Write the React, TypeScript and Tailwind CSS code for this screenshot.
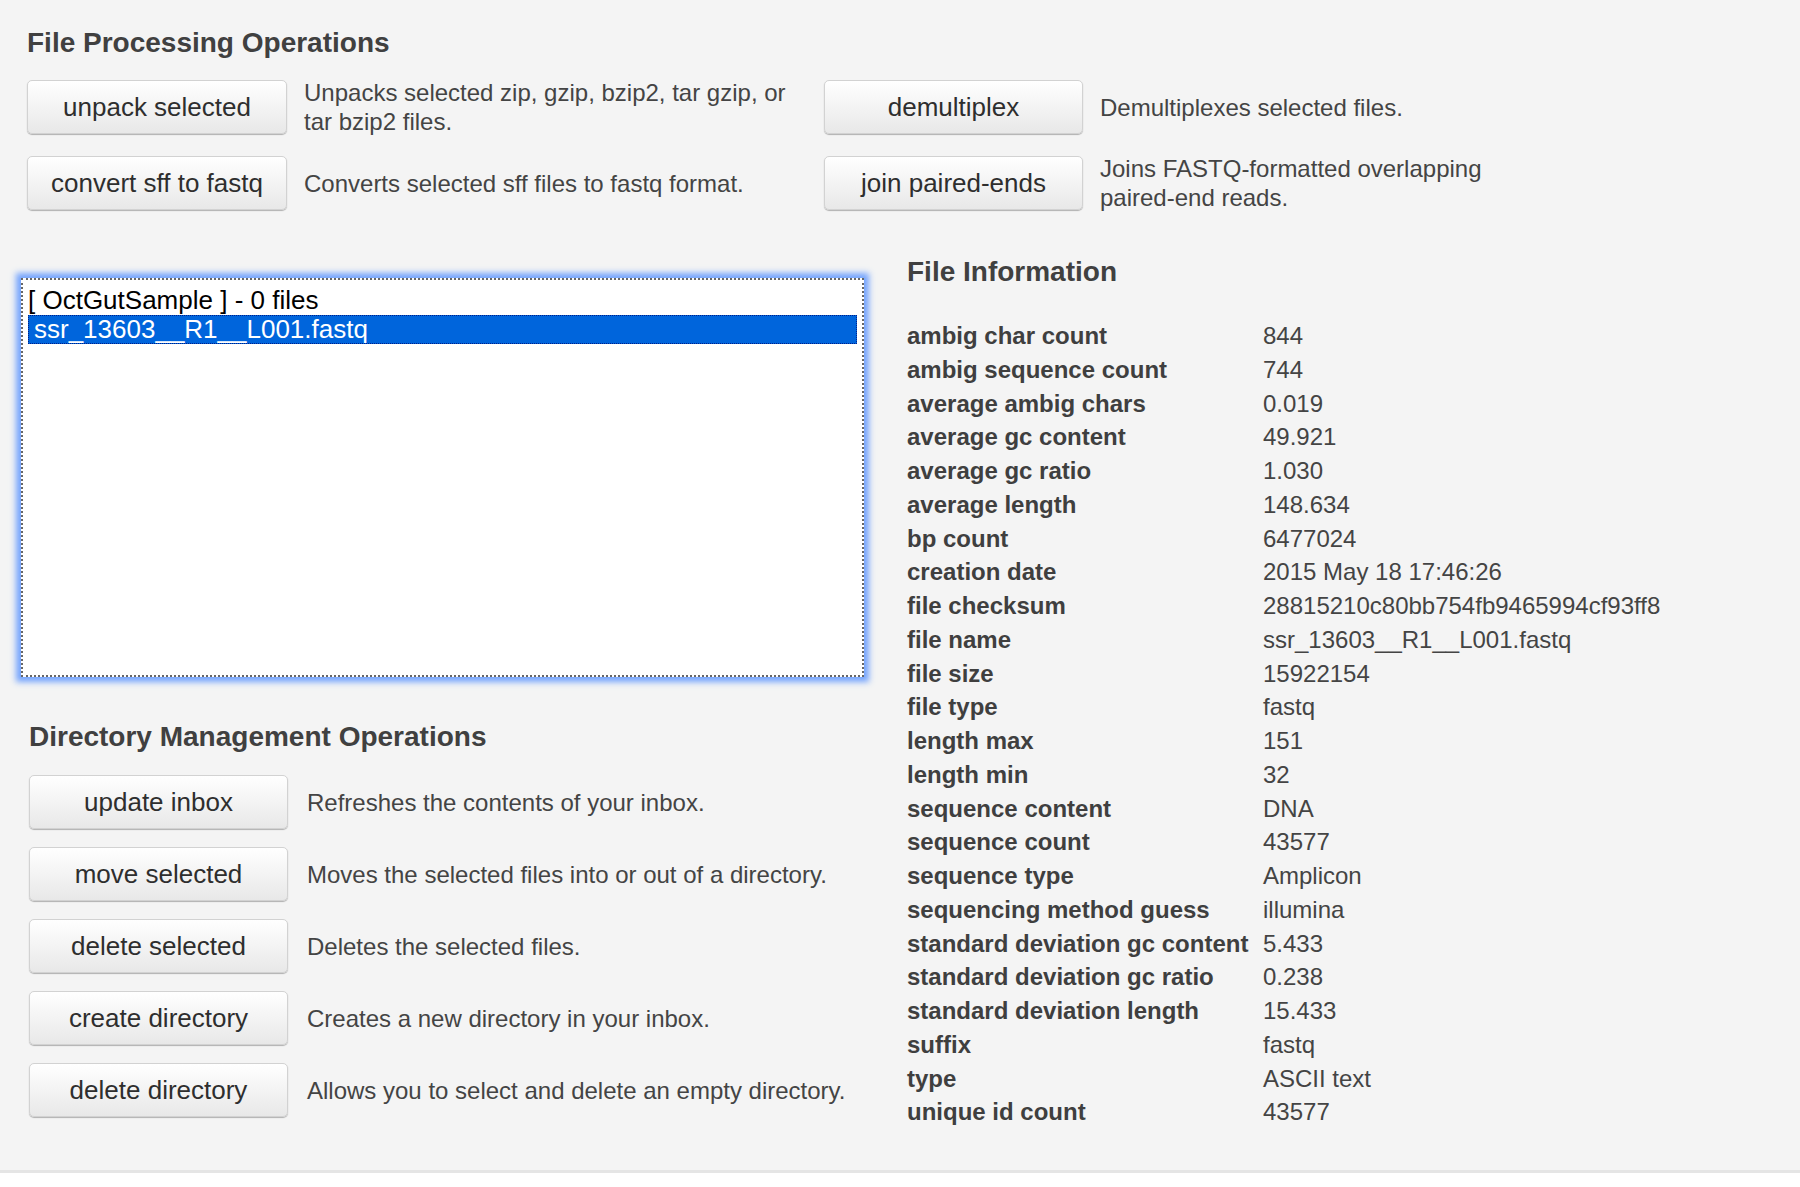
import React from "react";

const font = { fontFamily: '"Liberation Sans", Arial, Helvetica, sans-serif' };

function Btn({ children }: { children: React.ReactNode }) {
  return (
    <button className="h-[54px] w-full rounded-[5px] border border-[#d2d2d2] bg-linear-to-b from-white to-[#e8e8e8] text-[26px] leading-none text-[#2e2e2e] shadow-[0_1px_1px_rgba(0,0,0,0.28)]">
      {children}
    </button>
  );
}

const info: [string, string][] = [
  ["ambig char count", "844"],
  ["ambig sequence count", "744"],
  ["average ambig chars", "0.019"],
  ["average gc content", "49.921"],
  ["average gc ratio", "1.030"],
  ["average length", "148.634"],
  ["bp count", "6477024"],
  ["creation date", "2015 May 18 17:46:26"],
  ["file checksum", "28815210c80bb754fb9465994cf93ff8"],
  ["file name", "ssr_13603__R1__L001.fastq"],
  ["file size", "15922154"],
  ["file type", "fastq"],
  ["length max", "151"],
  ["length min", "32"],
  ["sequence content", "DNA"],
  ["sequence count", "43577"],
  ["sequence type", "Amplicon"],
  ["sequencing method guess", "illumina"],
  ["standard deviation gc content", "5.433"],
  ["standard deviation gc ratio", "0.238"],
  ["standard deviation length", "15.433"],
  ["suffix", "fastq"],
  ["type", "ASCII text"],
  ["unique id count", "43577"],
];

const dirOps: [string, string][] = [
  ["update inbox", "Refreshes the contents of your inbox."],
  ["move selected", "Moves the selected files into or out of a directory."],
  ["delete selected", "Deletes the selected files."],
  ["create directory", "Creates a new directory in your inbox."],
  ["delete directory", "Allows you to select and delete an empty directory."],
];

export default function App() {
  return (
    <div style={font} className="w-[1800px] bg-white">
      <div className="h-[1173px] border-b-[3px] border-[#e5e5e5] bg-[#f4f4f4]">
        {/* File Processing Operations */}
        <div className="pl-[27px] pt-[27px]">
          <h2 className="text-[28px] font-bold leading-[32px] text-[#404040]">File Processing Operations</h2>
          <div className="mt-[19px] grid grid-cols-[260px_503px_259px_420px] items-center gap-x-[17px] gap-y-[18px] text-[24px] leading-[29px] text-[#444]">
            <Btn>unpack selected</Btn>
            <div className="min-h-[58px] flex items-center">Unpacks selected zip, gzip, bzip2, tar gzip, or tar bzip2 files.</div>
            <Btn>demultiplex</Btn>
            <div>Demultiplexes selected files.</div>
            <Btn>convert sff to fastq</Btn>
            <div>Converts selected sff files to fastq format.</div>
            <Btn>join paired-ends</Btn>
            <div className="min-h-[58px] flex items-center">Joins FASTQ-formatted overlapping paired-end reads.</div>
          </div>
        </div>

        {/* Lower section */}
        <div className="mt-[44px] flex items-start gap-[43px] pl-[21px]">
          {/* Left column */}
          <div className="w-[843px] pt-[22px]">
            <div className="h-[399px] border-2 border-dotted border-[#666] bg-white px-[5px] pt-[6px] shadow-[0_0_6px_5px_rgba(95,150,255,0.85)]">
              <div className="text-[26px] leading-[29px] text-black">[ OctGutSample ] - 0 files</div>
              <div className="h-[29px] border border-dotted border-[#00208a] bg-[#0065dc] pl-[5px] text-[26px] leading-[27px] text-white">
                ssr_13603__R1__L001.fastq
              </div>
            </div>

            <div className="pl-[8px]">
              <h2 className="mt-[44px] text-[28px] font-bold leading-[32px] text-[#404040]">Directory Management Operations</h2>
              <div className="mt-[22px] grid grid-cols-[259px_1fr] items-center gap-x-[19px] gap-y-[18px] text-[24px] leading-[29px] text-[#444]">
                {dirOps.map(([b, d]) => (
                  <React.Fragment key={b}>
                    <Btn>{b}</Btn>
                    <div>{d}</div>
                  </React.Fragment>
                ))}
              </div>
            </div>
          </div>

          {/* Right column */}
          <div>
            <h2 className="text-[28px] font-bold leading-[32px] text-[#404040]">File Information</h2>
            <div className="mt-[31px] grid grid-cols-[356px_auto] text-[24px] leading-[33.75px] text-[#444]">
              {info.map(([k, v]) => (
                <React.Fragment key={k}>
                  <div className="font-bold text-[#3f3f3f]">{k}</div>
                  <div>{v}</div>
                </React.Fragment>
              ))}
            </div>
          </div>
        </div>
      </div>
    </div>
  );
}
